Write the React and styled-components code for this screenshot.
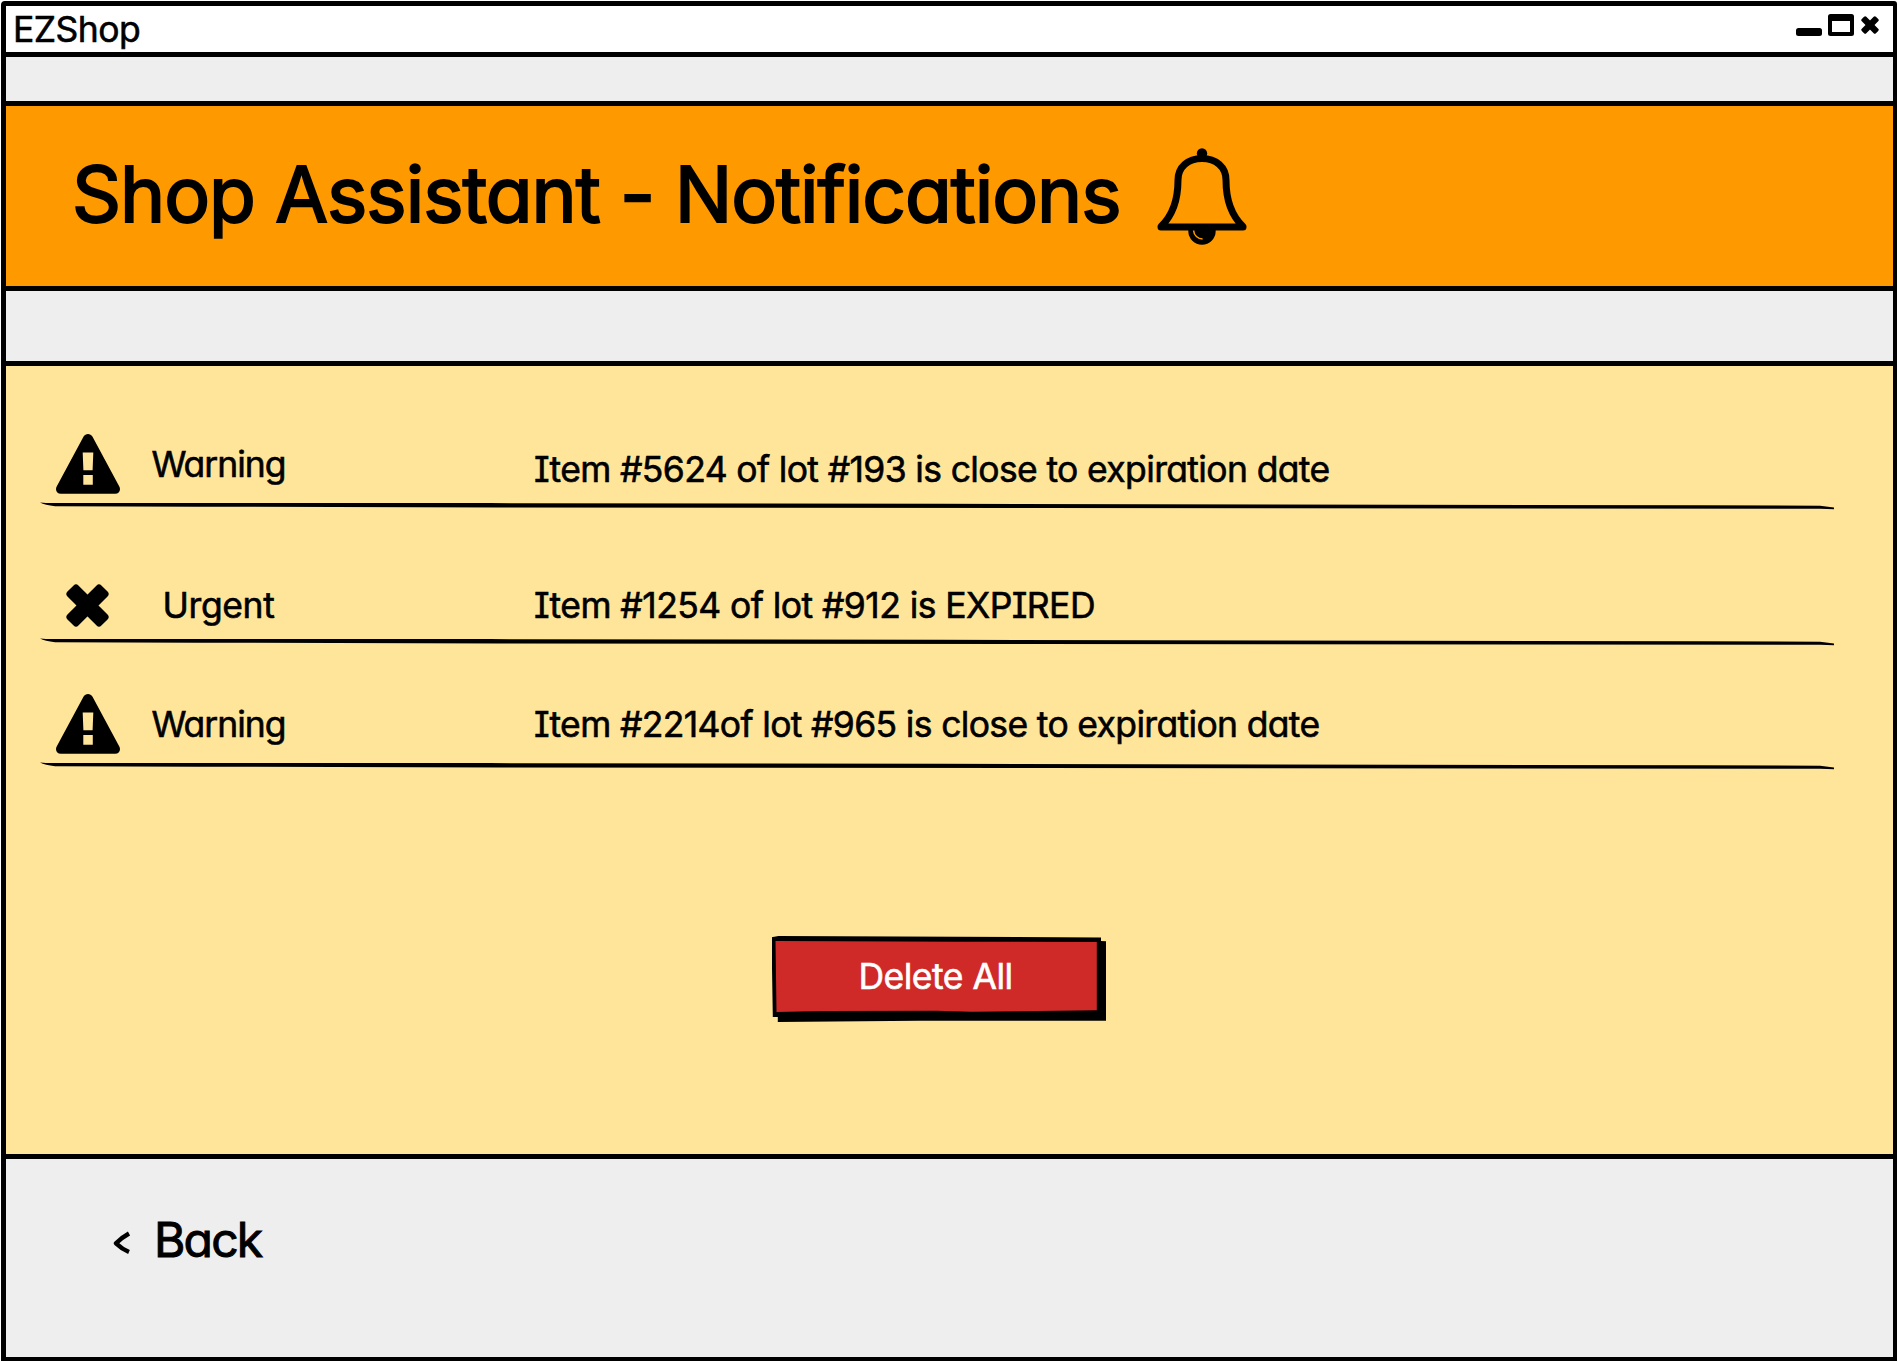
import React from "react";
import styled, { createGlobalStyle } from "styled-components";

const GlobalStyle = createGlobalStyle`
  * { box-sizing: border-box; }
  body {
    margin: 0;
    background: #fff;
    color: #000;
    font-family: Inter, Lato, "Liberation Sans", sans-serif;
    font-feature-settings: "cv11" 1, "cv08" 1, "calt" 0;
    -webkit-text-stroke: 0.6px currentColor;
    stroke-linejoin: round;
  }
`;

const Window = styled.div`
  width: 1896px;
  height: 1360px;
  margin: 1px 0 0 1px;
  border: 5px solid #000;
  border-right-width: 4px;
  border-bottom-width: 4px;
  border-radius: 4px 3px 0 0;
  background: #eee;
  display: flex;
  flex-direction: column;
`;

const TitleBar = styled.header`
  height: 51px;
  flex: none;
  display: flex;
  justify-content: space-between;
  padding: 0 14px 0 7px;
  background: #fff;
  border-bottom: 5px solid #000;
`;

const AppName = styled.span`
  font-size: 35.5px;
  line-height: 48px;
  letter-spacing: -0.55px;
  white-space: nowrap;
`;

const WindowControls = styled.div`
  display: flex;
  align-items: flex-end;
  gap: 6px;
  height: 30px;
`;

const Minimize = styled.span`
  width: 26px;
  height: 8px;
  border-radius: 2.5px;
  background: #000;
`;

const Maximize = styled.span`
  width: 26px;
  height: 22px;
  border: 4px solid #000;
  border-top-width: 7px;
  border-radius: 2.5px;
`;

const CloseSlot = styled.span`
  display: flex;
  margin: 0 0 2px 1px;
`;

const Banner = styled.div`
  height: 190px;
  flex: none;
  margin-top: 44px;
  padding: 0 0 0 66px;
  display: flex;
  align-items: center;
  gap: 38px;
  background: #ff9900;
  border-top: 5px solid #000;
  border-bottom: 5px solid #000;
`;

const Title = styled.h1`
  margin: 0 0 5px;
  width: 1047px;
  font-size: 76.5px;
  font-weight: 400;
  line-height: 96px;
  letter-spacing: -1.05px;
  white-space: nowrap;
  -webkit-text-stroke-width: 2px;
`;

const Panel = styled.main`
  height: 798px;
  flex: none;
  margin-top: 70px;
  padding: 68px 59px 0 34px;
  background: #ffe599;
  border-top: 5px solid #000;
  border-bottom: 5px solid #000;
  display: flex;
  flex-direction: column;
`;

const Entry = styled.div`
  margin-bottom: ${(p) => p.$after}px;
`;

const Row = styled.div`
  display: grid;
  grid-template-columns: 95px 167px 1fr;
  align-items: center;
  height: 60px;
  margin-bottom: ${(p) => p.$toRule}px;
`;

const IconCell = styled.div`
  display: flex;
  justify-content: center;
`;

const Label = styled.span`
  padding-top: 2px;
  font-size: 35.5px;
  line-height: 44px;
  text-align: center;
  letter-spacing: ${(p) => p.$tracking}px;
  white-space: nowrap;
`;

const Message = styled.span`
  padding: ${(p) => p.$drop}px 0 0 232px;
  font-size: 35.5px;
  line-height: 44px;
  letter-spacing: ${(p) => p.$tracking}px;
  white-space: nowrap;
`;

const RuleSvg = styled.svg`
  display: block;
`;

const ButtonShell = styled.button`
  align-self: center;
  width: 335px;
  height: 86px;
  flex: none;
  margin: 166px 0 0 4px;
  padding: 0;
  border: 0;
  background: #000;
  clip-path: polygon(0 1.3px, 7px 0, 329.5px 1.5px, 329.5px 5px, 334.5px 5.3px, 334.5px 84.7px, 148px 84.7px, 6.3px 86px, 6.3px 81px, 1.3px 81px);
`;

const ButtonFace = styled.span`
  display: block;
  height: 86px;
  padding-right: 7px;
  background: #d02a28;
  color: #fff;
  font-family: Inter, Lato, "Liberation Sans", sans-serif;
  font-feature-settings: "cv11" 1, "cv08" 1;
  -webkit-text-stroke: 0.6px #fff;
  font-size: 35.5px;
  line-height: 82px;
  letter-spacing: -0.5px;
  text-align: center;
  clip-path: polygon(4px 5px, 185px 5.7px, 325.3px 6px, 325.3px 74.3px, 200px 75.7px, 165px 74.7px, 50px 75px, 5px 76px);
`;

const Footer = styled.footer`
  display: flex;
  align-items: flex-start;
  padding: 53px 0 0 105px;
`;

const BackLink = styled.a`
  display: flex;
  align-items: center;
  gap: 22px;
  font-size: 48px;
  line-height: 56px;
  letter-spacing: -1.8px;
  -webkit-text-stroke-width: 1px;
`;

const BackArrow = styled.svg`
  margin: 5px 0 0 2px;
`;

function Cross({ size, length, thickness, radius }) {
  const c = size / 2;
  const bar = {
    x: c - length / 2,
    y: c - thickness / 2,
    width: length,
    height: thickness,
    rx: radius,
  };
  return (
    <svg width={size} height={size} viewBox={`0 0 ${size} ${size}`}>
      <rect {...bar} transform={`rotate(45 ${c} ${c})`} />
      <rect {...bar} transform={`rotate(-45 ${c} ${c})`} />
    </svg>
  );
}

function WarningIcon() {
  return (
    <svg width="64" height="60" viewBox="0 0 64 60">
      <path
        fillRule="evenodd"
        d="M27.6 2.6C29.5-.8 34.5-.8 36.4 2.6L63.3 52.6C65.2 56.2 63 59.8 59.2 59.8H4.8C1 59.8-1.2 56.2.7 52.6ZM26.7 18.5 27.4 36.3H36.6L37.3 18.5ZM27.3 41V50.7H36.8V41Z"
      />
    </svg>
  );
}

function BellIcon() {
  return (
    <svg width="90" height="97" viewBox="0 0 90 97">
      <circle cx="45" cy="5.4" r="5.2" />
      <path
        d="M4 78.5C15 68 21 52 21 32C21 19 31 10.4 45 10.4S69 19 69 32C69 52 75 68 86 78.5V79H4Z"
        fill="none"
        stroke="#000"
        strokeWidth="7"
        strokeLinejoin="round"
      />
      <path d="M31.3 80H58.7V83A13.7 13.7 0 0 1 31.3 83Z" />
      <path d="M36.6 82.5A9 9 0 0 0 45.6 91" fill="none" stroke="#ff9900" strokeWidth="1.5" />
    </svg>
  );
}

function Rule() {
  return (
    <RuleSvg width="1794" height="8" viewBox="0 0 1794 8">
      <path d="M0 .5 6 1.1 450 1.1 900 1.8 1660 3.2 1780 3.7 1794 5.6V7.2L1780 6.7 1000 6.1 460 5.6 160 4.7 15 4.2Q5 3.2 0 .5Z" />
    </RuleSvg>
  );
}

const entries = [
  { kind: "Warning", text: "Item #5624 of lot #193 is close to expiration date", drop: 12, toRule: 8, after: 65, tracking: -0.64 },
  { kind: "Urgent", text: "Item #1254 of lot #912 is EXPIRED", drop: 2, toRule: 3, after: 48, tracking: -0.57 },
  { kind: "Warning", text: "Item #2214of lot #965 is close to expiration date", drop: 1, toRule: 8, after: 0, tracking: -0.66 },
];

const labelTracking = { Warning: -1, Urgent: -0.4 };

export default function App() {
  return (
    <>
      <GlobalStyle />
      <Window>
        <TitleBar>
          <AppName>EZShop</AppName>
          <WindowControls>
            <Minimize />
            <Maximize />
            <CloseSlot>
              <Cross size={18} length={20} thickness={6.4} radius={1.6} />
            </CloseSlot>
          </WindowControls>
        </TitleBar>
        <Banner>
          <Title>Shop Assistant - Notifications</Title>
          <BellIcon />
        </Banner>
        <Panel>
          {entries.map((e) => (
            <Entry key={e.text} $after={e.after}>
              <Row $toRule={e.toRule}>
                <IconCell>
                  {e.kind === "Warning" ? (
                    <WarningIcon />
                  ) : (
                    <Cross size={43} length={48} thickness={15.5} radius={3.4} />
                  )}
                </IconCell>
                <Label $tracking={labelTracking[e.kind]}>{e.kind}</Label>
                <Message $drop={e.drop} $tracking={e.tracking}>{e.text}</Message>
              </Row>
              <Rule />
            </Entry>
          ))}
          <ButtonShell>
            <ButtonFace>Delete All</ButtonFace>
          </ButtonShell>
        </Panel>
        <Footer>
          <BackLink>
            <BackArrow width="19" height="24" viewBox="0 0 19 24">
              <path d="M16 2.5Q8 7 3 12.3Q9 18 16 21" fill="none" stroke="#000" strokeWidth="4.4" />
            </BackArrow>
            Back
          </BackLink>
        </Footer>
      </Window>
    </>
  );
}
